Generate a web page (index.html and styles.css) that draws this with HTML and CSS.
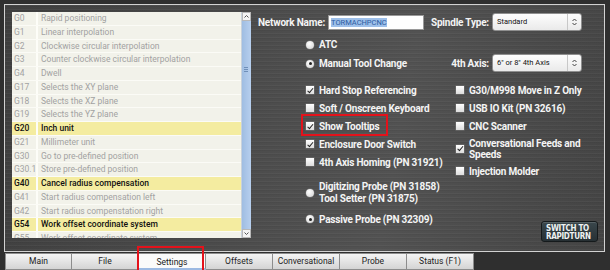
FILE: index.html
```html
<!DOCTYPE html>
<html lang="en">

<head>
    <meta charset="UTF-8">
    <meta name="viewport" content="width=device-width, initial-scale=1.0">
    <title>Settings</title>
    <link rel="stylesheet" href="styles.css">
</head>

<body>

    <div class="frame">
        <div class="gcodes">
            <div class="glist">
                <div class="grow"><span class="gc">G0</span><span class="gd">Rapid positioning</span></div>
                <div class="grow"><span class="gc">G1</span><span class="gd">Linear interpolation</span></div>
                <div class="grow"><span class="gc">G2</span><span class="gd">Clockwise circular interpolation</span></div>
                <div class="grow"><span class="gc">G3</span><span class="gd">Counter clockwise circular interpolation</span></div>
                <div class="grow"><span class="gc">G4</span><span class="gd">Dwell</span></div>
                <div class="grow"><span class="gc">G17</span><span class="gd">Selects the XY plane</span></div>
                <div class="grow"><span class="gc">G18</span><span class="gd">Selects the XZ plane</span></div>
                <div class="grow"><span class="gc">G19</span><span class="gd">Selects the YZ plane</span></div>
                <div class="grow aktif"><span class="gc">G20</span><span class="gd">Inch unit</span></div>
                <div class="grow"><span class="gc">G21</span><span class="gd">Millimeter unit</span></div>
                <div class="grow"><span class="gc">G30</span><span class="gd">Go to pre-defined position</span></div>
                <div class="grow"><span class="gc">G30.1</span><span class="gd">Store pre-defined position</span></div>
                <div class="grow aktif"><span class="gc">G40</span><span class="gd">Cancel radius compensation</span></div>
                <div class="grow"><span class="gc">G41</span><span class="gd">Start radius compensation left</span></div>
                <div class="grow"><span class="gc">G42</span><span class="gd">Start radius compenstation right</span></div>
                <div class="grow aktif"><span class="gc">G54</span><span class="gd">Work offset coordinate system</span></div>
                <div class="grow"><span class="gc">G55</span><span class="gd">Work offset coordinate system</span></div>
            </div>
            <div class="scroll">
                <div class="sbtn">
                    <svg width="7" height="7" viewBox="0 0 7 7"><path d="M1.5 4.5 L3.5 2.5 L5.5 4.5" fill="none" stroke="#555" stroke-width="1"/></svg>
                </div>
                <div class="thumb"><span class="grip"></span></div>
                <div class="sbtn">
                    <svg width="7" height="7" viewBox="0 0 7 7"><path d="M1.5 2.5 L3.5 4.5 L5.5 2.5" fill="none" stroke="#555" stroke-width="1"/></svg>
                </div>
            </div>
        </div>

        <div class="settings">
            <div class="row-top">
                <span class="lbl">Network Name:</span>
                <span class="field"><span class="terpilih">TORMACHPCNC</span></span>
                <span class="lbl spindle">Spindle Type:</span>
                <span class="dropdown">
                    <span class="pilihan">Standard</span>
                    <span class="arrows">
                        <svg width="7" height="12" viewBox="0 0 7 12"><path d="M1.5 5 L3.5 3 L5.5 5 M1.5 7 L3.5 9 L5.5 7" fill="none" stroke="#444" stroke-width="1"/></svg>
                    </span>
                </span>
            </div>

            <div class="row-mid">
                <div class="radios">
                    <div class="opsi"><span class="radio"></span>ATC</div>
                    <div class="opsi"><span class="radio on"></span>Manual Tool Change</div>
                </div>
                <div class="axis">
                    <span class="lbl">4th Axis:</span>
                    <span class="dropdown">
                        <span class="pilihan">6" or 8" 4th Axis</span>
                        <span class="arrows">
                            <svg width="7" height="12" viewBox="0 0 7 12"><path d="M1.5 5 L3.5 3 L5.5 5 M1.5 7 L3.5 9 L5.5 7" fill="none" stroke="#444" stroke-width="1"/></svg>
                        </span>
                    </span>
                </div>
            </div>

            <div class="checks">
                <div class="col1">
                    <div class="opsi"><span class="cek on"></span>Hard Stop Referencing</div>
                    <div class="opsi"><span class="cek"></span>Soft / Onscreen Keyboard</div>
                    <div class="opsi tandai"><span class="cek on"></span>Show Tooltips</div>
                    <div class="opsi"><span class="cek on"></span>Enclosure Door Switch</div>
                    <div class="opsi"><span class="cek"></span>4th Axis Homing (PN 31921)</div>
                </div>
                <div class="col2">
                    <div class="opsi"><span class="cek"></span>G30/M998 Move in Z Only</div>
                    <div class="opsi"><span class="cek"></span>USB IO Kit (PN 32616)</div>
                    <div class="opsi"><span class="cek"></span>CNC Scanner</div>
                    <div class="opsi dua"><span class="cek on"></span>Conversational Feeds and<br>Speeds</div>
                    <div class="opsi"><span class="cek"></span>Injection Molder</div>
                </div>
            </div>

            <div class="bottom">
                <div class="probes">
                    <div class="opsi dua"><span class="radio"></span>Digitizing Probe (PN 31858)<br>Tool Setter (PN 31875)</div>
                    <div class="opsi passive"><span class="radio on"></span>Passive Probe (PN 32309)</div>
                </div>
                <button class="switch">SWITCH TO<br>RAPIDTURN</button>
            </div>
        </div>
    </div>

    <div class="tabs">
        <div class="tab">Main</div>
        <div class="tab">File</div>
        <div class="tab aktif">Settings</div>
        <div class="tab">Offsets</div>
        <div class="tab">Conversational</div>
        <div class="tab">Probe</div>
        <div class="tab">Status (F1)</div>
    </div>

</body>

</html>
```

FILE: styles.css
```css
body {
    margin: 0;
    width: 610px;
    height: 270px;
    overflow: hidden;
    background: #2f2f2f;
    font-family: Roboto, "Liberation Sans", sans-serif;
}

/* main frame with brushed metal */
.frame {
    display: flex;
    margin: 4px 0 0 4px;
    width: 599px;
    height: 246px;
    border: 1px solid #d2d2d2;
    background-color: #484848;
    background-image:
        repeating-linear-gradient(180deg, rgba(255, 255, 255, 0.035) 0 1px, rgba(0, 0, 0, 0.04) 1px 2px, transparent 2px 4px),
        linear-gradient(100deg, #3f3f3f 0%, #4d4d4d 45%, #525252 65%, #444 100%);
}

.gcodes {
    display: flex;
    margin: 7px 0 0 7px;
    height: 226px;
}

.glist {
    width: 229px;
    overflow: hidden;
    background: #f2f2ea;
}

.grow {
    display: flex;
    height: 12.77px;
    border-bottom: 1px solid #fbfbf6;
    font-size: 8.5px;
    line-height: 12.77px;
    color: #a2a2a2;
}

.grow.aktif {
    background: #f4eca0;
    color: #111;
    font-weight: 500;
}

.gc {
    width: 22px;
    padding-left: 2px;
    border-right: 2px solid #fdfdf8;
}

.gd {
    padding-left: 3px;
    white-space: nowrap;
}

.scroll {
    display: flex;
    flex-direction: column;
    width: 9px;
    background: #dfe6ee;
    border-left: 1px solid #c9d2dc;
}

.sbtn {
    display: flex;
    align-items: center;
    justify-content: center;
    height: 9px;
    background: #f4f4f4;
    border: 1px solid #b8b8b8;
    box-sizing: border-box;
}

.thumb {
    flex: 1;
    background: linear-gradient(90deg, #9fbde2, #b7cfee);
    position: relative;
}

.grip {
    position: absolute;
    left: 2px;
    top: 46px;
    width: 4px;
    height: 5px;
    background: repeating-linear-gradient(180deg, #6f8fb8 0 1px, transparent 1px 2px);
}

/* right side form */
.settings {
    flex: 1;
    padding-left: 7px;
    color: #f4f4f4;
    font-size: 10px;
    font-weight: bold;
    letter-spacing: -0.2px;
}

.row-top {
    display: flex;
    align-items: center;
    height: 18px;
    margin-top: 8px;
}

.lbl {
    white-space: nowrap;
}

.field {
    width: 92px;
    height: 13px;
    margin-left: 3px;
    background: #fff;
    border: 1px solid #9a9a9a;
    font-size: 7.5px;
    font-weight: normal;
    letter-spacing: 0;
    line-height: 13px;
    padding-left: 2px;
}

.terpilih {
    background: #9ec0ea;
    color: #2b5aa0;
}

.spindle {
    margin-left: auto;
    margin-right: 3px;
}

.dropdown {
    display: flex;
    width: 88px;
    height: 16px;
    margin-right: 22px;
    border: 1px solid #8f8f8f;
    border-radius: 3px;
    background: linear-gradient(#fdfdfd, #eaeaea);
    color: #111;
    font-size: 7.5px;
    font-weight: normal;
    letter-spacing: 0;
    line-height: 16px;
}

.pilihan {
    flex: 1;
    padding-left: 4px;
    white-space: nowrap;
}

.arrows {
    display: flex;
    align-items: center;
    justify-content: center;
    width: 13px;
    border-left: 1px solid #c8c8c8;
}

.row-mid {
    display: flex;
    padding-top: 4px;
}

.radios {
    margin-left: 48px;
}

.opsi {
    display: flex;
    align-items: center;
    height: 19px;
    white-space: nowrap;
}

.radio {
    width: 8px;
    height: 8px;
    margin-right: 5px;
    border-radius: 50%;
    background: radial-gradient(circle at 40% 35%, #fff, #cfcfcf);
    box-shadow: 0 0 0 0.5px #777;
    position: relative;
    flex-shrink: 0;
}

.radio.on::after {
    content: "";
    position: absolute;
    left: 2.5px;
    top: 2.5px;
    width: 3px;
    height: 3px;
    border-radius: 50%;
    background: #222;
}

.axis {
    display: flex;
    align-items: center;
    margin: 19px 0 0 auto;
    height: 18px;
}

.axis .lbl {
    margin-right: 3px;
}

.checks {
    display: flex;
    margin-top: 8px;
}

.checks .opsi {
    height: 18px;
}

.col1 {
    width: 150px;
    margin-left: 48px;
}

.cek {
    width: 8px;
    height: 8px;
    margin-right: 5px;
    background: linear-gradient(#fff, #dcdcdc);
    box-shadow: 0 0 0 0.5px #777;
    position: relative;
    flex-shrink: 0;
}

.cek.on::after {
    content: "";
    position: absolute;
    left: 2.5px;
    top: 0.5px;
    width: 2px;
    height: 4.5px;
    border: solid #222;
    border-width: 0 1.5px 1.5px 0;
    transform: rotate(40deg);
}

.checks .opsi.dua {
    height: 27px;
    line-height: 11px;
}

.tandai {
    position: relative;
}

.tandai::after {
    content: "";
    position: absolute;
    left: -5px;
    top: -3px;
    width: 83px;
    height: 18px;
    border: 2.5px solid #e3121b;
}

.bottom {
    display: flex;
    margin-top: 1px;
}

.probes {
    margin-left: 48px;
}

.probes .opsi.dua {
    height: 24px;
    line-height: 12px;
}

.probes .passive {
    height: 18px;
    margin-top: 5px;
}

.switch {
    margin: 40px 6px 0 auto;
    width: 57px;
    height: 21px;
    padding: 2px 0 0 4px;
    border: 1px solid #151a1c;
    border-radius: 3px;
    background: linear-gradient(#3a474c, #273034);
    box-shadow: inset 0 1px 0 rgba(255, 255, 255, 0.15);
    color: #eef2f2;
    font-family: "Liberation Sans Narrow", "DejaVu Sans Condensed", sans-serif;
    font-size: 8px;
    font-weight: bold;
    line-height: 8px;
    text-align: left;
    letter-spacing: -0.3px;
    white-space: nowrap;
}

/* tab bar */
.tabs {
    display: flex;
    margin: 1px 0 0 5px;
}

.tab {
    position: relative;
    width: 66px;
    height: 15px;
    border: 1px solid #8d8d8d;
    border-left: none;
    background: linear-gradient(#f4f4f4, #d4d4d4);
    color: #1c1c1c;
    font-size: 8.5px;
    line-height: 15px;
    text-align: center;
}

.tab:first-child {
    border-left: 1px solid #8d8d8d;
    width: 65px;
}

.tab.aktif {
    background: #fafafa;
    border-bottom: 2px solid #9cb9e2;
    height: 14px;
    line-height: 16px;
}

.tab.aktif::after {
    content: "";
    position: absolute;
    left: -2px;
    top: -8px;
    width: 63px;
    height: 23px;
    border: 2px solid #e3121b;
}
```
